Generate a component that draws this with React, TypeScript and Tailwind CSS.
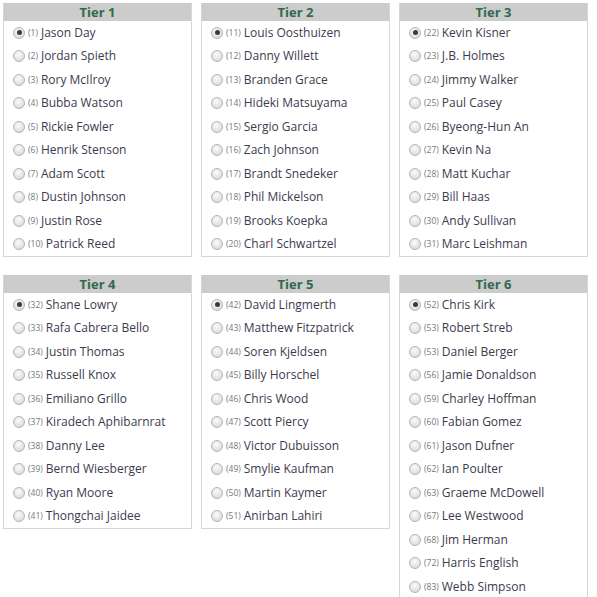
const tiers: { title: string; players: [number, string][] }[] = [
  {
    title: "Tier 1",
    players: [
      [1, "Jason Day"], [2, "Jordan Spieth"], [3, "Rory McIlroy"], [4, "Bubba Watson"], [5, "Rickie Fowler"],
      [6, "Henrik Stenson"], [7, "Adam Scott"], [8, "Dustin Johnson"], [9, "Justin Rose"], [10, "Patrick Reed"],
    ],
  },
  {
    title: "Tier 2",
    players: [
      [11, "Louis Oosthuizen"], [12, "Danny Willett"], [13, "Branden Grace"], [14, "Hideki Matsuyama"], [15, "Sergio Garcia"],
      [16, "Zach Johnson"], [17, "Brandt Snedeker"], [18, "Phil Mickelson"], [19, "Brooks Koepka"], [20, "Charl Schwartzel"],
    ],
  },
  {
    title: "Tier 3",
    players: [
      [22, "Kevin Kisner"], [23, "J.B. Holmes"], [24, "Jimmy Walker"], [25, "Paul Casey"], [26, "Byeong-Hun An"],
      [27, "Kevin Na"], [28, "Matt Kuchar"], [29, "Bill Haas"], [30, "Andy Sullivan"], [31, "Marc Leishman"],
    ],
  },
  {
    title: "Tier 4",
    players: [
      [32, "Shane Lowry"], [33, "Rafa Cabrera Bello"], [34, "Justin Thomas"], [35, "Russell Knox"], [36, "Emiliano Grillo"],
      [37, "Kiradech Aphibarnrat"], [38, "Danny Lee"], [39, "Bernd Wiesberger"], [40, "Ryan Moore"], [41, "Thongchai Jaidee"],
    ],
  },
  {
    title: "Tier 5",
    players: [
      [42, "David Lingmerth"], [43, "Matthew Fitzpatrick"], [44, "Soren Kjeldsen"], [45, "Billy Horschel"], [46, "Chris Wood"],
      [47, "Scott Piercy"], [48, "Victor Dubuisson"], [49, "Smylie Kaufman"], [50, "Martin Kaymer"], [51, "Anirban Lahiri"],
    ],
  },
  {
    title: "Tier 6",
    players: [
      [52, "Chris Kirk"], [53, "Robert Streb"], [53, "Daniel Berger"], [56, "Jamie Donaldson"], [59, "Charley Hoffman"],
      [60, "Fabian Gomez"], [61, "Jason Dufner"], [62, "Ian Poulter"], [63, "Graeme McDowell"], [67, "Lee Westwood"],
      [68, "Jim Herman"], [72, "Harris English"], [83, "Webb Simpson"],
    ],
  },
]

function Radio({ checked }: { checked: boolean }) {
  return (
    <span className="w-3 h-3 shrink-0 rounded-full border border-[#b5b5b5] bg-[radial-gradient(circle_at_45%_35%,#fbfbfb,#d2d2d2)] flex items-center justify-center">
      {checked && <span className="w-[5px] h-[5px] rounded-full bg-[#3a3a3a]" />}
    </span>
  )
}

export default function App() {
  return (
    <div className="w-[597px] h-[597px] overflow-hidden bg-white pl-[3px] pt-[3px] font-['Open_Sans',sans-serif]">
      <div className="grid grid-cols-[189px_189px_189px] gap-x-[9px] gap-y-[18px] items-start">
        {tiers.map((tier) => (
          <div key={tier.title} className="border border-[#d6d6d6] border-t-0">
            <div className="h-[18px] bg-[#cccccc] text-center text-[13px] leading-[18px] font-bold text-[#2f6a4c]">
              {tier.title}
            </div>
            {tier.players.map(([rank, name], i) => (
              <div key={name} className="h-[23.5px] flex items-center pl-[9px]">
                <Radio checked={i === 0} />
                <span className="ml-[3px] text-[8.5px] text-[#777] leading-none">({rank})</span>
                <span className="ml-[3px] text-[12px] text-[#3d3a4e] leading-none">{name}</span>
              </div>
            ))}
          </div>
        ))}
      </div>
    </div>
  )
}
